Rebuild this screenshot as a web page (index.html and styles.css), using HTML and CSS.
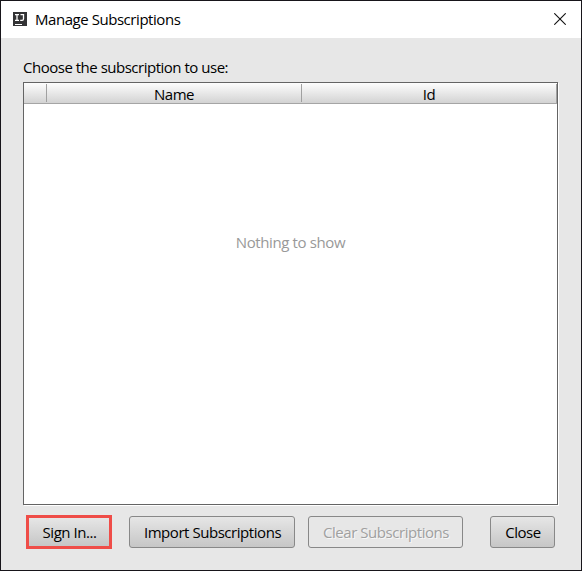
FILE: index.html
```html
<!DOCTYPE html>
<html lang="en">
<head>
<meta charset="utf-8">
<title>Manage Subscriptions</title>
<link rel="stylesheet" href="styles.css">
</head>
<body>
<main class="dialog">
  <header class="titlebar">
    <svg class="app-icon" width="14" height="14" viewBox="0 0 14 14" aria-hidden="true">
      <path fill="#333335" d="M0 0h14v14H0z"/>
      <path fill="none" stroke="#fff" stroke-width="1.3" d="M2 2.6h4M4 2.6v5M2 8.4h4M4 7v1.4M7.5 2.6h3v4.2q0 1.6-1.4 1.6H7.2"/>
      <path fill="#fff" d="M2 12h7v1H2z"/>
    </svg>
    <h1 class="title">Manage Subscriptions</h1>
    <svg class="close-icon" width="12" height="12" viewBox="0 0 12 12" aria-label="Close window">
      <path fill="none" stroke="#111" stroke-width="1.1" d="M0.3 0.3l11.4 11.4M11.7 0.3L0.3 11.7"/>
    </svg>
  </header>
  <section class="content">
    <p class="prompt">Choose the subscription to use:</p>
    <div class="table">
      <div class="table-head">
        <div class="cell"></div>
        <div class="cell">Name</div>
        <div class="cell">Id</div>
      </div>
      <div class="empty">Nothing to show</div>
    </div>
    <footer class="actions">
      <button class="button sign-in">Sign In...</button>
      <button class="button import">Import Subscriptions</button>
      <button class="button clear" disabled>Clear Subscriptions</button>
      <button class="button close">Close</button>
    </footer>
  </section>
</main>
</body>
</html>
```
FILE: styles.css
```css
* { box-sizing: border-box; }
body {
  margin: 0;
  font: 15px/20px "Open Sans", "Noto Sans", sans-serif;
  letter-spacing: -0.45px;
  color: #000;
}
.dialog {
  width: 582px;
  height: 571px;
  border: 1px solid #17151a;
  background: #e7e7e7;
  overflow: hidden;
}
.titlebar {
  display: flex;
  align-items: flex-start;
  height: 37px;
  padding: 0 15px 0 12px;
  background: #fff;
}
.app-icon { margin: 11px 8px 0 0; }
.title { margin: 8px 0 0; font: inherit; flex: 1; }
.close-icon { margin-top: 12px; }
.content { padding: 19px 22px 0; }
.prompt { margin: 0; height: 25px; letter-spacing: -0.49px; }
.table {
  width: 535px;
  height: 423px;
  border: 1px solid #646464;
  background: #fff;
  box-shadow: 1px 1px 0 #fff;
}
.table-head {
  display: grid;
  grid-template-columns: 23px 255px 1fr;
  height: 21px;
  padding-top: 1px;
  border-bottom: 1px solid #a5a5a5;
  background: linear-gradient(#fdfdfd, #d3d3d3);
}
.cell {
  height: 18px;
  border-right: 1px solid #a0a0a0;
  text-align: center;
  line-height: 21px;
}
.cell:last-child { height: 19px; }
.empty { padding-top: 128px; text-align: center; color: #999; letter-spacing: -0.38px; }
.actions { display: flex; height: 34px; margin: 10px 0 0 3px; align-items: center; }
.button {
  height: 32px;
  padding: 0 0 0 1px;
  border: 1px solid #888;
  border-radius: 3px;
  background: linear-gradient(#e6e6e6, #c6c6c6);
  color: #000;
  font: inherit;
  letter-spacing: inherit;
}
.sign-in { width: 86px; height: 34px; border: 3px solid #ef4d48; border-radius: 0; }
.import { width: 166px; margin-left: 17px; }
.clear { width: 155px; margin-left: 13px; background: #e7e7e7; color: #a0a0a0; text-shadow: 1px 1px 0 #f8f8f8; }
.close { width: 65px; margin-left: 27px; }
```
